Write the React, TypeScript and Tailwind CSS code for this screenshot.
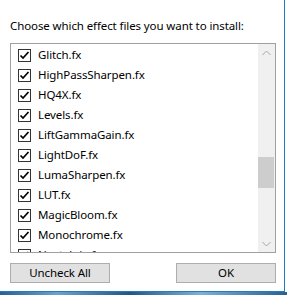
import React from "react";

const files = [
  "Glitch.fx",
  "HighPassSharpen.fx",
  "HQ4X.fx",
  "Levels.fx",
  "LiftGammaGain.fx",
  "LightDoF.fx",
  "LumaSharpen.fx",
  "LUT.fx",
  "MagicBloom.fx",
  "Monochrome.fx",
  "Nostalgia.fx",
];

function Check() {
  return (
    <span className="w-[13px] h-[13px] shrink-0 border border-[#333333] bg-white flex items-center justify-center">
      <svg width="11" height="11" viewBox="0 0 11 11">
        <polyline points="1.5,5.5 4,8 9.5,2" fill="none" stroke="#000" strokeWidth="1.7" />
      </svg>
    </span>
  );
}

function Chevron({ up }: { up?: boolean }) {
  return (
    <svg width="9" height="6" viewBox="0 0 9 6">
      <polyline
        points={up ? "0.5,5 4.5,1 8.5,5" : "0.5,1 4.5,5 8.5,1"}
        fill="none"
        stroke="#a6a6a6"
        strokeWidth="1"
      />
    </svg>
  );
}

export default function App() {
  return (
    <div className="w-[287px] h-[295px] bg-white overflow-hidden font-['Noto_Sans',sans-serif] text-[11.5px] tracking-[-0.1px] text-black">
      {/* Dialog window */}
      <div className="w-[285px] h-[292px] border-r border-b border-[#1e7cc8] pl-[10px] pt-[18px]">
        <div className="leading-[16px] whitespace-nowrap">Choose which effect files you want to install:</div>

        {/* File list */}
        <div className="mt-[9px] w-[266px] h-[210px] border border-[#a0a0a0] flex overflow-hidden">
          <div className="flex-1 pt-px overflow-hidden">
            {files.map((f) => (
              <div key={f} className="h-[20px] flex items-center pl-[7px] gap-[7px] whitespace-nowrap">
                <Check />
                <span className="leading-[16px]">{f}</span>
              </div>
            ))}
          </div>
          <div className="w-[17px] bg-[#f0f0f0] flex flex-col">
            <div className="h-[17px] flex items-center justify-center">
              <Chevron up />
            </div>
            <div className="flex-1 pt-[96px]">
              <div className="h-[31px] w-[16px] bg-[#cdcdcd]" />
            </div>
            <div className="h-[17px] flex items-center justify-center">
              <Chevron />
            </div>
          </div>
        </div>

        {/* Buttons */}
        <div className="mt-[10px] w-[266px] flex justify-between">
          <button className="w-[100px] h-[20px] bg-[#e1e1e1] border border-[#adadad] leading-[16px]">
            Uncheck All
          </button>
          <button className="w-[100px] h-[20px] bg-[#e1e1e1] border border-[#adadad] leading-[16px]">
            OK
          </button>
        </div>
      </div>
      {/* Desktop behind */}
      <div className="h-[3px] w-full bg-[linear-gradient(90deg,#2a5f8f,#6fa2c8_20%,#24557e_45%,#7fb0d4_70%,#2a5f8f)]" />
    </div>
  );
}
